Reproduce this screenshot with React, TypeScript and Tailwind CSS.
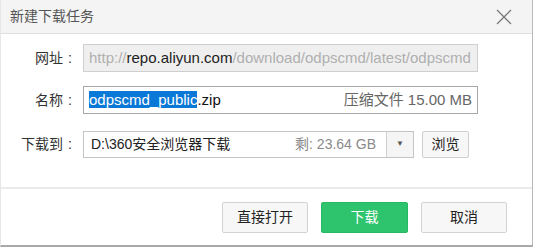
const font = "font-['Liberation_Sans','Noto_Sans_CJK_SC',sans-serif]";

function Label({ text }: { text: string }) {
  return (
    <div className="w-[82px] shrink-0 pr-[11px] flex justify-end items-center text-[14px] text-[#333]">
      <span>{text}</span>
      <span className="ml-[5px]">:</span>
    </div>
  );
}

export default function App() {
  return (
    <div className={`${font} w-[533px] h-[247px] bg-white flex flex-col border-r border-r-[#b8b8b8] border-b-2 border-b-[#a9a9a9] border-l border-l-[#e6e6e6] overflow-hidden`}>
      {/* title */}
      <div className="h-[34px] shrink-0 bg-[#f4f4f4] border-b border-[#dedede] flex items-center justify-between pl-[9px] pr-[20px]">
        <span className="text-[14px] text-[#555]">新建下载任务</span>
        <svg width="16" height="16" viewBox="0 0 16 16" className="mt-[1px]">
          <path d="M1 1 L15 15 M15 1 L1 15" stroke="#777" strokeWidth="1.3" fill="none" />
        </svg>
      </div>

      {/* form */}
      <div className="pt-[10px] flex flex-col">
        <div className="flex items-center h-[28px]">
          <Label text="网址" />
          <div className="w-[395px] h-[28px] bg-[#efefef] border border-[#cfcfcf] flex items-center pl-[5px] overflow-hidden whitespace-nowrap text-[15px] text-[#b0b0b0]">
            http://<span className="text-[#222]">repo.aliyun.com</span>/download/odpscmd/latest/odpscmd
          </div>
        </div>

        <div className="flex items-center h-[28px] mt-[14px]">
          <Label text="名称" />
          <div className="w-[395px] h-[28px] bg-white border border-[#a8a8a8] flex items-center justify-between pl-[5px] pr-[5px] whitespace-nowrap text-[15px]">
            <span className="text-[#111]">
              <span className="bg-[#0a78d7] text-white">odpscmd_public</span>.zip
            </span>
            <span className="text-[#666]">压缩文件 15.00 MB</span>
          </div>
        </div>

        <div className="flex items-center h-[26px] mt-[17px]">
          <Label text="下载到" />
          <div className="w-[331px] h-[27px] bg-white border border-[#c4c4c4] flex items-stretch">
            <div className="flex-1 flex items-center justify-between pl-[7px] pr-[10px] whitespace-nowrap text-[14px]">
              <span className="text-[#222]">D:\360安全浏览器下载</span>
              <span className="text-[#8a8a8a]">剩: 23.64 GB</span>
            </div>
            <div className="w-[27px] bg-[#f5f5f5] border-l border-[#d0d0d0] flex items-center justify-center text-[8px] text-[#555]">
              ▼
            </div>
          </div>
          <button className="ml-[8px] w-[47px] h-[27px] bg-[#f7f7f7] border border-[#cfcfcf] rounded-[2px] text-[14px] text-[#222]">
            浏览
          </button>
        </div>
      </div>

      <div className="mt-[30px] border-t-2 border-[#ebebeb] flex justify-end gap-[13px] pt-[13px] pr-[25px]">
        <button className="w-[86px] h-[31px] bg-[#f7f7f7] border border-[#d3d3d3] rounded-[2px] text-[14px] text-[#222]">
          直接打开
        </button>
        <button className="w-[87px] h-[31px] bg-[#2ec46d] border border-[#27b863] rounded-[2px] text-[14px] text-white">
          下载
        </button>
        <button className="w-[86px] h-[31px] bg-[#f7f7f7] border border-[#d3d3d3] rounded-[2px] text-[14px] text-[#222]">
          取消
        </button>
      </div>
    </div>
  );
}
